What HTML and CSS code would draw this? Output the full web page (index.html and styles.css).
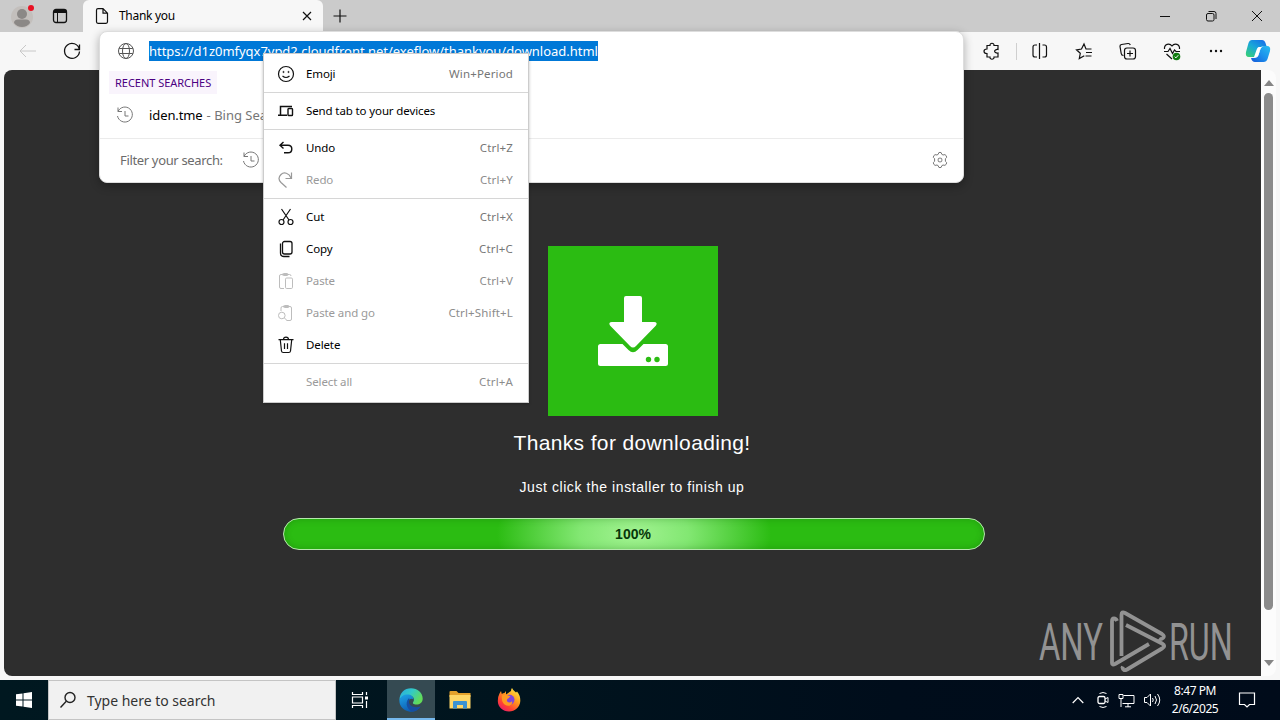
FILE: index.html
```html
<!DOCTYPE html>
<html lang="en">
<head>
    <meta charset="UTF-8">
    <title>Thank you</title>
    <link rel="stylesheet" href="styles.css">
</head>
<body>
    <div class="browser">
        <div class="tabbar">
            <div class="tab-tools">
                <svg class="profile" width="24" height="24" viewBox="0 0 24 24"><circle cx="12" cy="9" r="11" fill="#c3bfbc"/><circle cx="12" cy="6" r="5" fill="#8b8886"/><path d="M4 15q0-3.500 4-3.500h8q4 0 4 3.500-3 4-8 4t-8-4z" fill="#8b8886"/><circle cx="21" cy="0" r="3" fill="#e81123"/></svg>
                <svg class="icon" width="16" height="16" viewBox="0 0 16 16"><rect x="1.5" y="1.5" width="13" height="13" rx="2.5" stroke-width="1.3"/><path d="M2 3h12M2 4.2h12" stroke-width="1.8"/><path d="M5.5 4v10"/></svg>
            </div>
            <div class="tab">
                <svg class="icon" width="14" height="16" viewBox="0 0 14 16"><path d="M3 .7h5l4.5 4.5v8.6q0 1.5-1.5 1.5H3q-1.500 0-1.500-1.500V2.200Q1.500.7 3 .7zM8 .7v4.500h4.500" stroke-width="1.200"/></svg>
                <span class="tab-title">Thank you</span>
                <svg class="icon" width="10" height="10" viewBox="0 0 10 10"><path d="M1 1l8 8M9 1l-8 8" stroke-width="1.200"/></svg>
            </div>
            <svg class="icon new-tab" width="14" height="14" viewBox="0 0 14 14"><path d="M7 .5v13M.5 7h13" stroke-width="1.200"/></svg>
            <div class="window-controls">
                <svg class="icon" width="46" height="32" viewBox="0 0 46 32"><path d="M18 16.500h10"/></svg>
                <svg class="icon" width="46" height="32" viewBox="0 0 46 32"><rect x="18.500" y="13.500" width="7.500" height="7.500" rx="1.500"/><path d="M20.500 11.500h5.500q2 0 2 2v5.500"/></svg>
                <svg class="icon" width="46" height="32" viewBox="0 0 46 32"><path d="M18 11l10 10M28 11l-10 10"/></svg>
            </div>
        </div>

        <div class="toolbar">
            <svg class="icon back" width="44" height="38" viewBox="0 0 44 38"><path d="M14 19h16M20 13l-6 6 6 6"/></svg>
            <svg class="icon" width="44" height="38" viewBox="0 0 44 38"><path d="M29.300 17A7.500 7.500 0 1 0 29.500 19.500M29.500 12.500v5h-5" stroke-width="1.300"/></svg>
            <div class="toolbar-right">
                <svg class="icon" width="44" height="38" viewBox="0 0 44 38"><path d="M17 13.500h3c-.5-3 4.500-3 4 0h4v4c-4.500-.5-4.500 4 0 3.500v4h-4c.5 3-4.500 3-4 0h-3v-3.500c-4 0-4-4.500 0-4.500z" stroke-width="1.200"/></svg>
                <span class="divider"></span>
                <svg class="icon" width="44" height="38" viewBox="0 0 44 38"><path d="M19 13h-2q-2 0-2 2v8q0 2 2 2h2M24.500 13h2q2 0 2 2v8q0 2-2 2h-2M21.500 11v16" stroke-width="1.200"/></svg>
                <svg class="icon" width="44" height="38" viewBox="0 0 44 38"><path d="M24.500 17H24l-2-5-2.500 5-5 .8 3.800 3.500-1 5.200 5-2.700M24.500 17h5M24 20.500h6M23.500 24h6" stroke-width="1.200"/></svg>
                <svg class="icon" width="44" height="38" viewBox="0 0 44 38"><path d="M17.500 23.500q-2 0-2.300-2L14 14.500q-.2-1.700 1.500-2l6.500-1q1.700-.2 2.300 1.500" stroke-width="1.200"/><rect x="18.500" y="16" width="11" height="11" rx="2.500" stroke-width="1.200"/><path d="M24 18.500v6M21 21.500h6" stroke-width="1.200"/></svg>
                <svg class="icon" width="44" height="38" viewBox="0 0 44 38"><path d="M14.500 17c-.5-5 5-6.500 7.500-3 2.500-3.500 8-2 7.500 3M14 19.500h4l2-3 2.500 5 2-3.500 1.500 1.500h4M16.500 22l5.500 5" stroke-width="1.200"/><circle cx="26.500" cy="24.500" r="3.800" fill="#107c10" stroke="none"/><path d="M24.700 24.700l1.200 1.200 2.400-2.700" stroke="#fff"/></svg>
                <svg width="44" height="38" viewBox="0 0 44 38"><g fill="#111"><circle cx="17" cy="19" r="1.200"/><circle cx="22" cy="19" r="1.200"/><circle cx="27" cy="19" r="1.200"/></g></svg>
                <svg width="40" height="38" viewBox="0 0 40 38">
                    <defs>
                        <linearGradient id="cpLeft" x1=".8" y1="0" x2="0" y2="1"><stop offset="0" stop-color="#1672e8"/><stop offset=".45" stop-color="#19a8d8"/><stop offset="1" stop-color="#3ad46c"/></linearGradient>
                        <linearGradient id="cpRight" x1="1" y1="0" x2="0" y2="1"><stop offset="0" stop-color="#27bdf0"/><stop offset=".5" stop-color="#1b91ec"/><stop offset="1" stop-color="#1458d8"/></linearGradient>
                    </defs>
                    <path d="M14 8h10q2.500 0 3.500 3l1 3h-3q-2.500 0-3.500 3l-1.500 5q-1 3-4 3H11q-4 0-3-5l2.500-9q1-3 3.500-3z" fill="url(#cpLeft)"/>
                    <path d="M26 14h3q4 0 3 5l-2.500 8q-1 3-4 3H17q-3 0-4-4h3.500q3 0 4-3l2-6q1-3 3.500-3z" fill="url(#cpRight)"/>
                    <path d="M20.500 15h3.500q-1.500 1-2 3l-1.500 5q-.7 2-2.500 2h-2l2.500-7q.8-2.500 2-3z" fill="#fff"/>
                </svg>
            </div>
        </div>

        <div class="viewport">
            <main class="page">
                <div class="download-tile">
                    <svg width="70" height="70" viewBox="0 0 70 70"><path d="M26 2q0-2 2-2h14q2 0 2 2v24h12q4 0 2 3.500L38 50q-3 3-6 0L12 29.500Q10 26 14 26h12z" fill="#fff"/><path d="M2.500 48h22l6 6q4.500 4.500 9 0l6-6h22q2.500 0 2.500 2.500v17q0 2.500-2.500 2.500h-65Q0 70 0 67.500v-17Q0 48 2.500 48z" fill="#fff"/><circle cx="50.500" cy="63.500" r="2.700" fill="#2bbc12"/><circle cx="59" cy="63.500" r="2.700" fill="#2bbc12"/></svg>
                </div>
                <h1>Thanks for downloading!</h1>
                <p>Just click the installer to finish up</p>
                <div class="progress"><span>100%</span></div>
                <svg class="watermark" width="200" height="64" viewBox="0 0 200 64">
                    <text transform="translate(1 50) scale(.63 1)">ANY</text>
                    <text transform="translate(131 50) scale(.62 1)">RUN</text>
                    <g fill="none" stroke="#929292" stroke-width="3.800" stroke-linejoin="round">
                        <path d="M79 11q-1-2.500-3-2.500-2 0-2 3V53q0 2.500 3 1L111 34"/>
                        <path d="M83.500 46V5q0-4 3.500-2L124 24q3 2 1 4t-4 .5"/>
                        <path d="M88 15l36 18.500q4.500 2.500 0 5L89 59.500q-4 2-4.500-2l.500-1"/>
                    </g>
                </svg>
            </main>
            <div class="scrollbar">
                <svg width="10" height="6" viewBox="0 0 10 6"><path d="M0 6h10L5 0z" fill="#858585"/></svg>
                <div class="thumb"></div>
                <svg width="10" height="6" viewBox="0 0 10 6"><path d="M0 0h10L5 6z" fill="#858585"/></svg>
            </div>
        </div>
    </div>

    <!-- address bar dropdown -->
    <div class="omnibox">
        <div class="address-row">
            <svg class="icon" width="18" height="18" viewBox="0 0 18 18"><circle cx="9" cy="9" r="7.500"/><ellipse cx="9" cy="9" rx="3.500" ry="7.500"/><path d="M2.200 6.500h13.600M2.200 11.500h13.600"/></svg>
            <span class="url">https://d1z0mfyqx7ypd2.cloudfront.net/exeflow/thankyou/download.html</span>
        </div>
        <div class="recent-label">RECENT SEARCHES</div>
        <div class="suggestion">
            <svg class="icon" width="18" height="18" viewBox="0 0 18 18"><path d="M2 5.500A7.500 7.500 0 1 1 1.500 10M2 1.500v4h4M9 5v5h3.500"/></svg>
            <span class="query">iden.tme</span><span class="source">- Bing Search</span>
        </div>
        <div class="filter-row">
            <span>Filter your search:</span>
            <svg class="icon" width="18" height="18" viewBox="0 0 18 18"><path d="M2 5.500A7.500 7.500 0 1 1 1.500 10M2 1.500v4h4M9 5v5h3.500"/></svg>
            <svg class="icon gear" width="18" height="18" viewBox="0 0 18 18"><path d="M7.300 3.200Q7.300 1.300 9 1.300t1.700 1.900l1.300.8q2.200-1.200 3.300.8t-.9 2.900v2.600q2 1 .9 2.900t-3.300.8l-1.300.8Q10.700 16.700 9 16.700t-1.700-1.900L6 14q-2.200 1.200-3.300-.8t.9-2.900V7.700q-2-1-.9-2.900T6 4z"/><rect x="7.200" y="7.200" width="3.600" height="3.600" rx="1"/></svg>
        </div>
    </div>

    <div class="menu">
        <div class="menu-item">
            <svg class="icon" width="18" height="18" viewBox="0 0 18 18"><circle cx="9" cy="9" r="7.500" stroke-width="1.200"/><path d="M5.500 11q3.500 3 7 0" stroke-width="1.200"/><circle cx="6.500" cy="7" r=".6"/><circle cx="11.500" cy="7" r=".6"/></svg>
            <span>Emoji</span><kbd>Win+Period</kbd>
        </div>
        <div class="separator"></div>
        <div class="menu-item">
            <svg class="icon" width="18" height="18" viewBox="0 0 18 18"><path d="M15 4.500H3.500V13M1 13.200h9" stroke-width="1.500"/><rect x="11" y="6.500" width="4.500" height="7" rx=".8" stroke-width="1.400"/></svg>
            <span>Send tab to your devices</span>
        </div>
        <div class="separator"></div>
        <div class="menu-item">
            <svg class="icon" width="18" height="18" viewBox="0 0 18 18"><path d="M6.500 3L3 6.200l3.500 3.300M3.200 6.200H11q3.800 0 3.800 3.800T11 13.800H7" stroke-width="1.400"/></svg>
            <span>Undo</span><kbd>Ctrl+Z</kbd>
        </div>
        <div class="menu-item disabled">
            <svg class="icon" width="18" height="18" viewBox="0 0 18 18"><path d="M14.500 1.500v6h-6M14 7C12 2 7 .5 4 3.500s-2 6 0 8l5.500 5" stroke-width="1.200"/></svg>
            <span>Redo</span><kbd>Ctrl+Y</kbd>
        </div>
        <div class="separator"></div>
        <div class="menu-item">
            <svg class="icon" width="18" height="18" viewBox="0 0 18 18"><path d="M4.500 1l7.500 11M13.500 1L6 12" stroke-width="1.200"/><circle cx="4.500" cy="14" r="2.500" stroke-width="1.200"/><circle cx="13.500" cy="14" r="2.500" stroke-width="1.200"/></svg>
            <span>Cut</span><kbd>Ctrl+X</kbd>
        </div>
        <div class="menu-item">
            <svg class="icon" width="18" height="18" viewBox="0 0 18 18"><rect x="5.500" y="1.500" width="9.500" height="12.500" rx="2" stroke-width="1.300"/><path d="M3.500 3.500V13q0 3.500 3.500 3.500h5.500" stroke-width="1.300"/></svg>
            <span>Copy</span><kbd>Ctrl+C</kbd>
        </div>
        <div class="menu-item disabled pale">
            <svg class="icon" width="18" height="18" viewBox="0 0 18 18"><path d="M7 16.500H4q-1.500 0-1.500-1.500V4q0-1.500 1.500-1.500h8.500q1.500 0 1.500 1.500M5.500 2.500q0-1 1-1h3.500q1 0 1 1t-1 1H6.500q-1 0-1-1"/><rect x="8.500" y="6" width="7" height="10.500" rx="1.200"/></svg>
            <span>Paste</span><kbd>Ctrl+V</kbd>
        </div>
        <div class="menu-item disabled pale">
            <svg class="icon" width="18" height="18" viewBox="0 0 18 18"><path d="M4 7V4q0-1.500 1.500-1.500H13q1.500 0 1.500 1.500v11q0 1.500-1.500 1.500H9.500M6.500 2.500q0-1 1-1H11q1 0 1 1t-1 1H7.500q-1 0-1-1M7.500 14l2.500 2.500"/><circle cx="4.800" cy="11.500" r="3.300"/></svg>
            <span>Paste and go</span><kbd>Ctrl+Shift+L</kbd>
        </div>
        <div class="menu-item">
            <svg class="icon" width="18" height="18" viewBox="0 0 18 18"><path d="M1.500 3.700h15M6.500 3.500q0-2.300 2.500-2.300t2.500 2.300M3.300 4l1.200 11q.2 1.500 1.700 1.500h5.600q1.500 0 1.700-1.500L14.700 4M7.500 7.300v5.700M10.500 7.300v5.700" stroke-width="1.200"/></svg>
            <span>Delete</span>
        </div>
        <div class="separator"></div>
        <div class="menu-item disabled">
            <i class="no-icon"></i>
            <span>Select all</span><kbd>Ctrl+A</kbd>
        </div>
    </div>

    <div class="taskbar">
        <div class="task start">
            <svg width="16" height="16" viewBox="0 0 16 16"><path d="M0 2.300l6.500-.9v6.100H0zM7.500 1.200L16 0v7.500H7.500zM0 8.500h6.500v6.100L0 13.700zM7.500 8.500H16V16l-8.500-1.200z" fill="#fff"/></svg>
        </div>
        <div class="search">
            <svg class="icon" width="18" height="18" viewBox="0 0 18 18"><circle cx="11" cy="6.500" r="5" stroke-width="1.400"/><path d="M7.300 10.300L1.500 16.500" stroke-width="1.400"/></svg>
            <span>Type here to search</span>
        </div>
        <div class="task task-view">
            <svg class="icon" width="18" height="16" viewBox="0 0 18 16"><path d="M1.500 0v2.500h10V0M1.500 5h10v6h-10zM1.500 16v-2.500h10V16M15.500 0v3M15.500 9v7" stroke-width="1.200"/><path d="M14 4.500h3v3h-3z" fill="#fff" stroke="none"/></svg>
        </div>
        <div class="task active">
            <svg width="24" height="24" viewBox="0 0 24 24">
                <defs>
                    <linearGradient id="edgeTop" x1="0" y1="0" x2="1" y2=".5"><stop offset="0" stop-color="#2aa9e0"/><stop offset=".5" stop-color="#32c9c8"/><stop offset="1" stop-color="#62dc58"/></linearGradient>
                    <linearGradient id="edgeLow" x1="0" y1="0" x2=".5" y2="1"><stop offset="0" stop-color="#1ea5e8"/><stop offset="1" stop-color="#0c59b0"/></linearGradient>
                </defs>
                <path d="M.5 12C.5 5 5.500.3 12 .3S23.700 5 23.700 10.500c0 4-3 6-6.200 6-3 0-4.500-1.200-3-3 1.500-2.500-.5-6.500-5.500-6.500-4 0-7 2-8.500 5z" fill="url(#edgeTop)"/>
                <path d="M.4 12C1.500 8.500 4.500 6.500 8.500 6.500c3.500 0 6 2 6 5-2-1.500-5-.5-5 3.500 0 4.500 5 7 12 3.500-3 4.500-8 6.300-12.500 4.700C3 21.500.2 17 .4 12z" fill="url(#edgeLow)"/>
                <path d="M9.500 10.500c-4 5-1 11.500 4 13 3.500-.3 6.500-2.300 8-5-6 2-11-.5-11.500-4-.2-2 .5-3 1-3.500z" fill="#174ea0"/>
            </svg>
        </div>
        <div class="task">
            <svg width="22" height="18" viewBox="0 0 22 18"><path d="M.5 1q0-1 1-1h6l2 2h12v4H.5z" fill="#e5a22b"/><path d="M.5 4h21v13.500H.5z" fill="#ffd766"/><path d="M4 17.500V11q0-1 1-1h12q1 0 1 1v6.500h-4V14H8v3.500z" fill="#3c93d1"/></svg>
        </div>
        <div class="task">
            <svg width="24" height="24" viewBox="0 0 24 24">
                <defs>
                    <linearGradient id="fox" x1=".9" y1="0" x2=".2" y2="1"><stop offset="0" stop-color="#fff04a"/><stop offset=".4" stop-color="#ffa01e"/><stop offset=".75" stop-color="#ff4133"/><stop offset="1" stop-color="#e8196f"/></linearGradient>
                </defs>
                <path d="M2.500 5.500L4 3l.8 3q1.200-1 2.700-1L9 3v3.500L14 3q0-2 1-3 1 2.500 4 4.500l1-1q3.500 4 3.300 9.500C23 19 18 23.500 12 23.500S.8 19 .8 13q0-4.500 1.700-7.500z" fill="url(#fox)"/>
                <circle cx="12.500" cy="11.700" r="5" fill="#8046dc"/>
                <path d="M5 7.500q3.500-2 6 0l2.500.7-2 2q-2 .5-1.500 3 2.500 2.500 5 0 1 3-2.500 4.500-5 .5-7-4-1-3-.5-6.200z" fill="#ff9a22"/>
            </svg>
        </div>
        <div class="tray">
            <svg class="icon" width="12" height="16" viewBox="0 0 12 16"><path d="M.7 11L6 5.500l5.300 5.500" stroke-width="1.200"/></svg>
            <svg class="icon recorder" width="12" height="18" viewBox="0 0 12 18"><rect x="1" y="5.500" width="7" height="7" rx="1.500" stroke-width="1.300"/><path d="M8 8l3-1.500v5L8 10M2.500 2.500q3.500-2 7 0M2.500 15.500q3.500 2 7 0"/></svg>
            <svg class="icon" width="17" height="16" viewBox="0 0 17 16"><path d="M5.500 3.500H16v8H4.500M10 11.500V15M7 14.800h6M1 2.500h4v4H1zM3 6.500V15"/></svg>
            <svg class="icon" width="18" height="16" viewBox="0 0 18 16"><path d="M1.500 5.500H4L7.500 2v12L4 10.500H1.500zM9.500 6q1.500 2 0 4M12 4q3 4 0 8M14.500 2q4.500 6 0 12"/></svg>
            <div class="clock"><span>8:47 PM</span><span>2/6/2025</span></div>
            <svg class="icon" width="18" height="18" viewBox="0 0 18 18"><path d="M1.500 2h15v11.500h-5L9 16l-2.500-2.500h-5z" stroke-width="1.200"/></svg>
        </div>
    </div>
</body>
</html>
```
FILE: styles.css
```css
* {
    box-sizing: border-box;
}
body {
    margin: 0;
    width: 1280px;
    height: 720px;
    overflow: hidden;
    display: flex;
    flex-direction: column;
    font-family: "Noto Sans", "Open Sans", sans-serif;
    font-size: 12px;
    color: #000;
    white-space: nowrap;
}
svg {
    display: block;
    flex: none;
}
.icon {
    fill: none;
    stroke: #111;
    stroke-width: 1;
}

/* browser frame */
.browser {
    height: 680px;
    display: flex;
    flex-direction: column;
    background: #f7f7f7;
}
.tabbar {
    height: 32px;
    display: flex;
    align-items: center;
    background: #cbcbcb;
}
.tab-tools {
    width: 83px;
    display: flex;
    align-items: center;
    gap: 18px;
    padding-left: 10px;
}
.profile {
    margin-top: 8px;
    overflow: visible;
}
.tab {
    width: 240px;
    height: 32px;
    display: flex;
    align-items: center;
    padding: 0 11px 0 12px;
    background: #f7f7f7;
    border-radius: 6px 6px 0 0;
}
.tab-title {
    flex: 1;
    padding: 0 0 1px 10px;
    font-size: 12px;
    letter-spacing: -0.3px;
}
.new-tab {
    margin-left: 10px;
}
.window-controls {
    display: flex;
    margin-left: auto;
}
.toolbar {
    height: 38px;
    display: flex;
    align-items: center;
    padding-left: 6px;
}
.back {
    stroke: #c8c8c8;
}
.toolbar-right {
    display: flex;
    align-items: center;
    margin-left: auto;
    padding-right: 2px;
}
.divider {
    width: 1px;
    height: 17px;
    margin: 0 1px 0 2px;
    background: #cfcfcf;
}
.viewport {
    height: 606px;
    display: flex;
    margin: 0 4px;
    border-radius: 8px;
    overflow: hidden;
    background: #fcfcfc;
}
.page {
    width: 1257px;
    display: flex;
    flex-direction: column;
    align-items: center;
    padding-top: 176px;
    background: #2e2e2e;
    color: #fff;
    font-family: "Liberation Sans", Arial, sans-serif;
}
.download-tile {
    width: 170px;
    height: 170px;
    display: grid;
    place-items: center;
    background: #2bbc12;
}
.page h1 {
    margin: 14px 1px 0 0;
    font-size: 21px;
    line-height: 26px;
    font-weight: normal;
    letter-spacing: 0.36px;
}
.page p {
    margin: 20px 1px 0 0;
    font-size: 14px;
    line-height: 22px;
    letter-spacing: 0.57px;
}
.progress {
    width: 702px;
    height: 32px;
    margin: 20px 0 0 3px;
    padding-right: 2px;
    display: grid;
    place-items: center;
    border: 1px solid #b5e8ac;
    border-radius: 16px;
    background: radial-gradient(ellipse 137px 70px at 50% 50%, #a2f292 0%, #82e772 40%, #2bbc12 100%);
    box-shadow: inset 0 0 7px rgba(0, 60, 0, 0.25);
    color: #06370a;
    font-size: 14px;
    font-weight: bold;
}
.watermark {
    margin: 60px 23px 0 0;
    align-self: flex-end;
}
.watermark text {
    fill: #929292;
    font-family: Roboto, sans-serif;
    font-size: 52px;
}
.scrollbar {
    width: 15px;
    display: flex;
    flex-direction: column;
    align-items: center;
    padding: 10px 0;
}
.thumb {
    width: 9px;
    height: 517px;
    margin: 7px 0 50px;
    border-radius: 5px;
    background: #8b8b8b;
}

/* address bar popup */
.omnibox {
    position: absolute;
    left: 99px;
    top: 31px;
    width: 865px;
    height: 152px;
    border: 1px solid #ddd;
    border-radius: 8px;
    background: #fff;
    box-shadow: 0 3px 10px rgba(0, 0, 0, 0.3);
    font-size: 13px;
}
.omnibox .icon {
    stroke: #777;
}
.address-row {
    height: 39px;
    display: flex;
    align-items: center;
    gap: 14px;
    padding: 0 0 2px 17px;
}
.address-row .icon {
    stroke: #555;
}
.url {
    height: 20px;
    line-height: 20px;
    background: #0078d7;
    color: #fff;
    letter-spacing: -0.03px;
}
.recent-label {
    width: 108px;
    height: 23px;
    margin-left: 9px;
    padding-left: 6px;
    line-height: 24px;
    font-size: 11px;
    letter-spacing: -0.03px;
    background: #f9f4fc;
    color: #4b0082;
}
.suggestion {
    height: 44px;
    display: flex;
    align-items: center;
    padding: 0 0 2px 16px;
}
.query {
    padding: 0 4px 0 15px;
    letter-spacing: -0.1px;
}
.source {
    color: #767676;
}
.filter-row {
    height: 44px;
    display: flex;
    align-items: center;
    padding: 0 14px 2px 20px;
    border-top: 1px solid #ebebeb;
    color: #6b6b6b;
}
.filter-row span {
    width: 122px;
    letter-spacing: -0.34px;
}
.gear {
    margin-left: auto;
}

/* context menu */
.menu {
    position: absolute;
    left: 263px;
    top: 53px;
    width: 266px;
    height: 350px;
    padding: 4px 0;
    border: 1px solid #ccc;
    background: #fff;
    box-shadow: 0 1px 3px rgba(0, 0, 0, 0.25);
    font-size: 11.5px;
}
.menu-item {
    height: 32px;
    display: flex;
    align-items: center;
    gap: 11px;
    padding: 0 15px 0 13px;
}
.menu span,
.menu kbd {
    padding-bottom: 2px;
}
.menu span {
    letter-spacing: -0.12px;
}
.menu kbd {
    margin-left: auto;
    font-family: inherit;
    letter-spacing: 0.15px;
    color: #767676;
}
.no-icon {
    width: 18px;
}
.disabled {
    color: #9a9a9a;
}
.menu .disabled kbd {
    color: #8c8c8c;
}
.disabled .icon {
    stroke: #999;
}
.pale .icon {
    stroke: #bdbdbd;
}
.separator {
    height: 1px;
    margin: 2px 0;
    background: #d6d6d6;
}

/* windows taskbar */
.taskbar {
    height: 40px;
    display: flex;
    background: linear-gradient(90deg, #001820 0, #00141e 40%, #000d1b 70%, #000b1a 100%);
    color: #fff;
}
.task {
    width: 49px;
    display: grid;
    place-items: center;
}
.start {
    width: 48px;
}
.task-view {
    width: 51px;
    padding-right: 4px;
}
.taskbar .icon {
    stroke: #fff;
}
.task.active {
    width: 48px;
    background: #354a52;
    border-bottom: 2px solid #76b9ed;
    padding-top: 2px;
}
.search {
    width: 288px;
    display: flex;
    align-items: center;
    gap: 10px;
    padding-left: 10px;
    border: 1px solid #c4c4c4;
    background: #f1f1f1;
    color: #333;
    font-size: 14px;
    letter-spacing: -0.02px;
}
.taskbar .search .icon {
    stroke: #222;
}
.tray {
    display: flex;
    align-items: center;
    margin-left: auto;
    padding-right: 24px;
    gap: 8px;
}
.recorder {
    margin: 0 1px 0 5px;
}
.clock {
    width: 52px;
    display: flex;
    flex-direction: column;
    align-items: center;
    margin: 0 9px 0 0;
    line-height: 18px;
    font-size: 12px;
    letter-spacing: -0.45px;
}
```
